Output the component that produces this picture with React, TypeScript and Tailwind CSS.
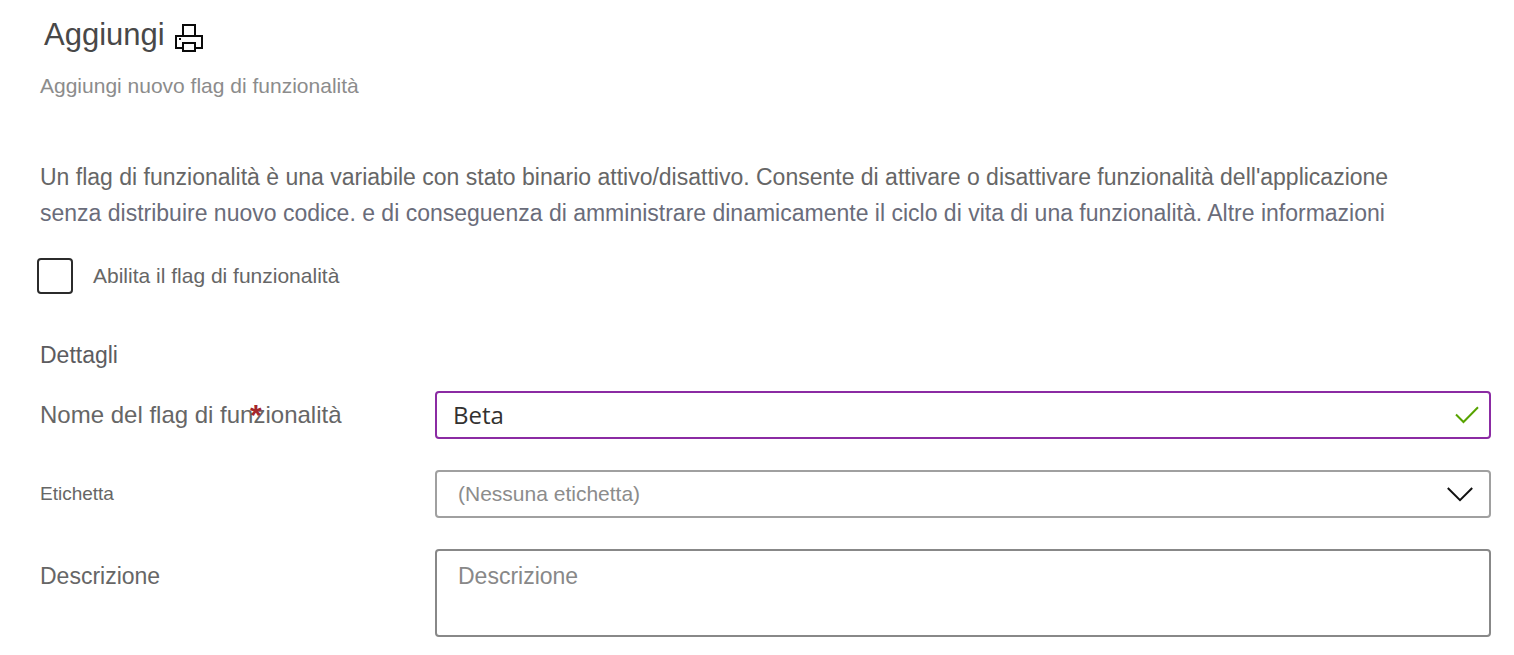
import { useState } from "react";

function PrinterIcon() {
  return (
    <svg width="28" height="28" viewBox="0 0 28 28" fill="none" stroke="#0a0a0a" strokeWidth="2" aria-hidden="true">
      <path d="M8 11V1h12v10" />
      <path d="M7 24H1V12h26v12h-6" />
      <path d="M8 19h12v8H8z" />
      <path d="M4 15h2" />
    </svg>
  );
}

function CheckMark() {
  return (
    <svg width="24" height="18" viewBox="0 0 24 18" fill="none" stroke="#57a300" strokeWidth="2" aria-hidden="true">
      <path d="M1 8.5l7.5 7.5L23 1.2" />
    </svg>
  );
}

function Chevron() {
  return (
    <svg width="26" height="15" viewBox="0 0 26 15" fill="none" stroke="#111" strokeWidth="2" aria-hidden="true">
      <path d="M.8 1l12.2 12.2L25.2 1" />
    </svg>
  );
}

export default function App() {
  const [enabled, setEnabled] = useState(false);
  const [name, setName] = useState("Beta");
  const [description, setDescription] = useState("");

  return (
    <main className="bg-white pt-[17px] pr-[23px] pb-4 pl-10 font-['Liberation_Sans',Arial,sans-serif] text-[#666]">
      <header>
        <div className="flex items-center gap-[10px] pl-1">
          <h1 className="text-[31px] leading-9 text-[#484848]">Aggiungi</h1>
          <button type="button" aria-label="Stampa" className="pt-[6px]">
            <PrinterIcon />
          </button>
        </div>
        <p className="mt-[21px] text-[21px] leading-6 text-[#8c8c8c]">Aggiungi nuovo flag di funzionalità</p>
      </header>

      <p className="mt-[61px] text-[23px] leading-9">
        <span className="block">
          Un flag di funzionalità è una variabile con stato binario attivo/disattivo. Consente di attivare o disattivare funzionalità dell'applicazione
        </span>
        <span className="block text-[#6a6c7a]">
          senza distribuire nuovo codice. e di conseguenza di amministrare dinamicamente il ciclo di vita di una funzionalità.{" "}
          <a href="#informazioni">Altre informazioni</a>
        </span>
      </p>

      <label className="-ml-[3px] mt-[27px] flex w-fit items-center gap-5 text-[21px] leading-6">
        <input
          type="checkbox"
          checked={enabled}
          onChange={(e) => setEnabled(e.target.checked)}
          className="size-9 appearance-none rounded-[4px] border-2 border-[#2b2b2b] bg-white checked:bg-[#2b2b2b]"
        />
        Abilita il flag di funzionalità
      </label>

      <h2 className="mt-[46px] text-[23px] leading-[30px] text-[#5c5c60]">Dettagli</h2>

      <div className="mt-[21px] grid grid-cols-[395px_1fr] gap-y-[31px]">
        <label htmlFor="name" className="relative w-fit self-center text-[24px] leading-8">
          Nome del flag di funzionalità
          <span className="absolute top-0 left-[210px] text-[30px] leading-8 font-bold text-[#a4262c]">*</span>
        </label>
        <div className="flex h-12 items-center rounded-[4px] border-2 border-[#8b2ba3] pr-[10px] pl-4">
          <input
            id="name"
            required
            value={name}
            onChange={(e) => setName(e.target.value)}
            className="min-w-0 flex-1 font-['Open_Sans','Noto_Sans',sans-serif] text-[24px] leading-8 text-[#323130] outline-none"
          />
          <CheckMark />
        </div>

        <label htmlFor="tag" className="self-center text-[19px] leading-6">Etichetta</label>
        <div className="relative">
          <select
            id="tag"
            className="h-12 w-full appearance-none rounded-[4px] border-2 border-[#a0a0a0] bg-white pr-12 pl-[21px] text-[21px] text-[#8c8c8c] outline-none"
          >
            <option>(Nessuna etichetta)</option>
          </select>
          <span className="pointer-events-none absolute inset-y-0 right-[18px] flex items-center">
            <Chevron />
          </span>
        </div>

        <label htmlFor="description" className="pt-3 text-[23px] leading-[30px]">Descrizione</label>
        <textarea
          id="description"
          placeholder="Descrizione"
          value={description}
          onChange={(e) => setDescription(e.target.value)}
          className="h-[88px] w-full resize-none rounded-[4px] border-2 border-[#888] px-[21px] pt-[10px] text-[23px] leading-[30px] outline-none placeholder:text-[#888]"
        />
      </div>
    </main>
  );
}
